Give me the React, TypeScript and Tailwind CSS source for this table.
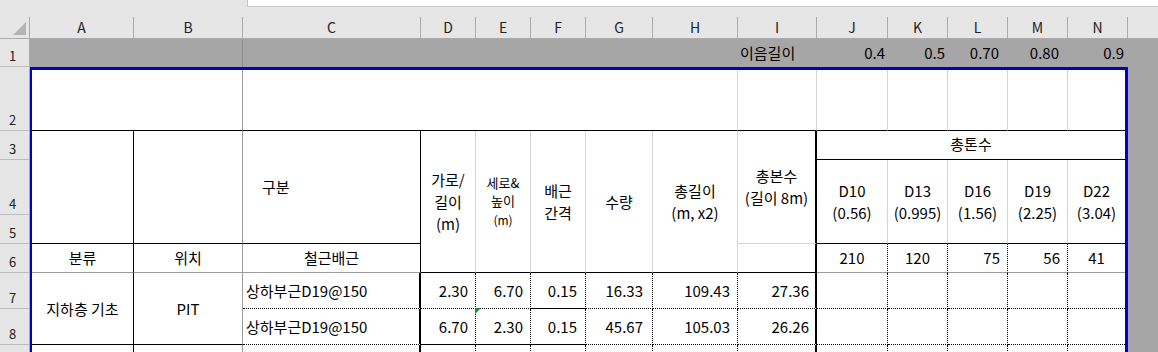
import React from "react";

// border helpers (sheet gridlines, black borders, dotted hairlines, freeze-pane line)
const rG = "border-r border-r-[#d4d4d4]";
const rK = "border-r border-r-black";
const rK2 = "border-r-2 border-r-black";
const rF = "border-r border-r-[#9c9c9c]";
const rD = "border-r border-r-black [border-right-style:dotted]";
const bK = "border-b border-b-black";
const bG = "border-b border-b-[#d4d4d4]";
const bF = "border-b border-b-[#9c9c9c]";
const bD = "border-b border-b-black [border-bottom-style:dotted]";

const HEADS: [string, string][] = [
  ["A", "w-[104px]"],
  ["B", "w-[109px]"],
  ["C", "w-[178px]"],
  ["D", "w-[55px]"],
  ["E", "w-[55px]"],
  ["F", "w-[55px]"],
  ["G", "w-[67px]"],
  ["H", "w-[85px]"],
  ["I", "w-[79px]"],
  ["J", "w-[71px]"],
  ["K", "w-[60px]"],
  ["L", "w-[60px]"],
  ["M", "w-[60px]"],
  ["N", "w-[60px]"],
];

const ROW1: Record<string, React.ReactNode> = {
  I: <span className="pl-[2px]">이음길이</span>,
  J: <span className="ml-auto pr-[3px]">0.4</span>,
  K: <span className="ml-auto pr-[3px]">0.5</span>,
  L: <span className="ml-auto pr-[9px]">0.70</span>,
  M: <span className="ml-auto pr-[9px]">0.80</span>,
  N: <span className="ml-auto pr-[4px]">0.9</span>,
};

// row 9 is cut off at the bottom, its number is not visible
const ROW_HEADS: [string, string][] = [
  ["2", "h-[64px]"],
  ["3", "h-[29px]"],
  ["4", "h-[55px]"],
  ["5", "h-[29px]"],
  ["6", "h-[29px]"],
  ["7", "h-[36px]"],
  ["8", "h-[36px]"],
  ["", "h-[40px]"],
];

function Cell({ className, children }: { className: string; children?: React.ReactNode }) {
  return <div className={`flex min-w-0 ${className}`}>{children}</div>;
}

function Num({ v, pr = "pr-[7px]" }: { v: string; pr?: string }) {
  return <span className={`ml-auto self-center ${pr}`}>{v}</span>;
}

function RowHead({ n, h }: { n: string; h: string }) {
  return (
    <div className={`${h} flex items-end justify-center pr-[4px] pb-[4px] border-b border-b-[#bdbdbd] text-[13px] leading-none text-[#222]`}>
      {n}
    </div>
  );
}

export default function App() {
  return (
    <div className="w-[1158px] h-[352px] overflow-hidden bg-[#e6e6e6] font-['Noto_Sans_CJK_KR','Noto_Sans',sans-serif] text-black">
      {/* formula bar edge */}
      <div className="flex h-[17px]">
        <div className="w-[247px]" />
        <div className="flex-1 h-[7px] bg-white border-l border-b border-[#c6c6c6]" />
      </div>

      {/* column headers */}
      <div className="flex h-[22px] text-[14px] text-[#222]">
        <div className="w-[30px] border-r border-b border-[#ababab] flex items-end">
          <svg width="29" height="21" viewBox="0 0 29 21">
            <polygon points="13,18 26,18 26,5" fill="#b4b4b4" />
          </svg>
        </div>
        {HEADS.map(([l, w]) => (
          <div key={l} className={`${w} border-r border-b border-[#ababab] flex items-center justify-center pb-[1px]`}>
            {l}
          </div>
        ))}
        <div className="flex-1 border-b border-[#ababab]" />
      </div>

      {/* row 1 */}
      <div className="flex h-[28px] text-[15px]">
        <RowHead n="1" h="h-[28px] w-[30px] border-r border-r-[#ababab]" />
        <div className="flex flex-1 bg-[#a6a6a6]">
          {HEADS.map(([l, w]) => (
            <div key={l} className={`${w} flex items-center ${l === "B" ? "border-r border-r-[#8c8c8c]" : ""}`}>
              {ROW1[l]}
            </div>
          ))}
          <div className="flex-1" />
        </div>
      </div>

      {/* body */}
      <div className="flex">
        <div className="w-[30px] border-r border-r-[#ababab] flex flex-col">
          {ROW_HEADS.map(([n, h], i) => (
            <RowHead key={i} n={n} h={h} />
          ))}
        </div>

        <div className="bg-white border-t-[3px] border-l-2 border-r-[3px] border-[#0000cc] text-[15px] leading-[22px]">
          <div className="grid grid-cols-[102px_109px_178px_55px_55px_55px_67px_85px_79px_71px_60px_60px_60px_57px] grid-rows-[61px_29px_55px_29px_29px_36px_36px_40px]">
            {/* row 2 */}
            <Cell className={`col-start-1 row-start-1 col-span-2 ${rF} ${bK}`} />
            <Cell className={`col-start-3 row-start-1 col-span-6 ${rG} ${bK}`} />
            <Cell className={`col-start-9 row-start-1 ${rG} ${bK}`} />
            <Cell className={`col-start-10 row-start-1 ${rG} ${bK}`} />
            <Cell className={`col-start-11 row-start-1 ${rG} ${bK}`} />
            <Cell className={`col-start-12 row-start-1 ${rG} ${bK}`} />
            <Cell className={`col-start-13 row-start-1 ${rG} ${bK}`} />
            <Cell className={`col-start-14 row-start-1 ${bK}`} />

            {/* rows 3-6 : header block */}
            <Cell className={`col-start-1 row-start-2 row-span-3 ${rK} ${bK}`} />
            <Cell className={`col-start-2 row-start-2 row-span-3 ${rF} ${bK}`} />
            <Cell className={`col-start-3 row-start-2 row-span-3 items-center pl-[19px] ${rK} ${bK}`}>구분</Cell>
            <Cell className={`col-start-4 row-start-2 row-span-4 items-center justify-center text-center ${rG} ${bK}`}>
              <span>가로/<br />길이<br />(m)</span>
            </Cell>
            <Cell className={`col-start-5 row-start-2 row-span-4 items-center justify-center text-center text-[13px] leading-[18.5px] ${rG} ${bK}`}>
              <span>세로&amp;<br />높이<br /><span className="text-[12px]">(m)</span></span>
            </Cell>
            <Cell className={`col-start-6 row-start-2 row-span-4 items-center justify-center text-center ${rG} ${bK}`}>
              <span>배근<br />간격</span>
            </Cell>
            <Cell className={`col-start-7 row-start-2 row-span-4 items-center justify-center ${rG} ${bK}`}>수량</Cell>
            <Cell className={`col-start-8 row-start-2 row-span-4 items-center justify-center text-center ${rG} ${bK}`}>
              <span>총길이<br />(m, x2)</span>
            </Cell>
            <Cell className={`col-start-9 row-start-2 row-span-3 items-center justify-center text-center ${rK2} ${bG}`}>
              <span>총본수<br />(길이 8m)</span>
            </Cell>
            <Cell className={`col-start-9 row-start-5 ${rK2} ${bK}`} />
            <Cell className={`col-start-10 row-start-2 col-span-5 items-center justify-center pb-[3px] ${bK}`}>총톤수</Cell>

            <Cell className={`col-start-10 row-start-3 row-span-2 items-center justify-center text-center ${rG} ${bK}`}>
              <span>D10<br />(0.56)</span>
            </Cell>
            <Cell className={`col-start-11 row-start-3 row-span-2 items-center justify-center text-center ${rG} ${bK}`}>
              <span>D13<br />(0.995)</span>
            </Cell>
            <Cell className={`col-start-12 row-start-3 row-span-2 items-center justify-center text-center ${rG} ${bK}`}>
              <span>D16<br />(1.56)</span>
            </Cell>
            <Cell className={`col-start-13 row-start-3 row-span-2 items-center justify-center text-center ${rG} ${bK}`}>
              <span>D19<br />(2.25)</span>
            </Cell>
            <Cell className={`col-start-14 row-start-3 row-span-2 items-center justify-center text-center ${bK}`}>
              <span>D22<br />(3.04)</span>
            </Cell>

            {/* row 6 */}
            <Cell className={`col-start-1 row-start-5 items-center justify-center ${rK} ${bF}`}>분류</Cell>
            <Cell className={`col-start-2 row-start-5 items-center justify-center ${rF} ${bF}`}>위치</Cell>
            <Cell className={`col-start-3 row-start-5 items-center justify-center ${rK} ${bF}`}>철근배근</Cell>
            <Cell className={`col-start-10 row-start-5 items-center justify-center ${rD} ${bF}`}>210</Cell>
            <Cell className={`col-start-11 row-start-5 items-center justify-center ${rD} ${bF}`}>120</Cell>
            <Cell className={`col-start-12 row-start-5 ${rD} ${bF}`}><Num v="75" /></Cell>
            <Cell className={`col-start-13 row-start-5 ${rD} ${bF}`}><Num v="56" /></Cell>
            <Cell className={`col-start-14 row-start-5 items-center justify-center ${bF}`}>41</Cell>

            {/* rows 7-8 : data */}
            <Cell className={`col-start-1 row-start-6 row-span-2 items-center justify-center ${rK} ${bK}`}>지하층 기초</Cell>
            <Cell className={`col-start-2 row-start-6 row-span-2 items-center justify-center ${rF} ${bK}`}>PIT</Cell>

            <Cell className={`col-start-3 row-start-6 items-center pl-[3px] ${rK2} ${bD}`}>상하부근D19@150</Cell>
            <Cell className={`col-start-4 row-start-6 ${rD} ${bD}`}><Num v="2.30" /></Cell>
            <Cell className={`col-start-5 row-start-6 ${rD} ${bD}`}><Num v="6.70" /></Cell>
            <Cell className={`col-start-6 row-start-6 ${rD} ${bK}`}><Num v="0.15" pr="pr-[8px]" /></Cell>
            <Cell className={`col-start-7 row-start-6 ${rD} ${bD}`}><Num v="16.33" pr="pr-[9px]" /></Cell>
            <Cell className={`col-start-8 row-start-6 ${rD} ${bD}`}><Num v="109.43" /></Cell>
            <Cell className={`col-start-9 row-start-6 ${rK2} ${bD}`}><Num v="27.36" pr="pr-[6px]" /></Cell>
            <Cell className={`col-start-10 row-start-6 ${rD} ${bD}`} />
            <Cell className={`col-start-11 row-start-6 ${rD} ${bD}`} />
            <Cell className={`col-start-12 row-start-6 ${rD} ${bD}`} />
            <Cell className={`col-start-13 row-start-6 ${rD} ${bD}`} />
            <Cell className={`col-start-14 row-start-6 ${bD}`} />

            <Cell className={`col-start-3 row-start-7 items-center pl-[3px] ${rK2} ${bD}`}>상하부근D19@150</Cell>
            <Cell className={`col-start-4 row-start-7 ${rD} ${bK}`}><Num v="6.70" /></Cell>
            <Cell className={`col-start-5 row-start-7 relative ${rD} ${bK}`}>
              <span className="absolute -top-px -left-px w-0 h-0 border-t-[6px] border-r-[6px] border-t-[#1a8a35] border-r-transparent" />
              <Num v="2.30" />
            </Cell>
            <Cell className={`col-start-6 row-start-7 ${rD} ${bK}`}><Num v="0.15" pr="pr-[8px]" /></Cell>
            <Cell className={`col-start-7 row-start-7 ${rD} ${bD}`}><Num v="45.67" pr="pr-[9px]" /></Cell>
            <Cell className={`col-start-8 row-start-7 ${rD} ${bD}`}><Num v="105.03" /></Cell>
            <Cell className={`col-start-9 row-start-7 ${rK2} ${bD}`}><Num v="26.26" pr="pr-[6px]" /></Cell>
            <Cell className={`col-start-10 row-start-7 ${rD} ${bD}`} />
            <Cell className={`col-start-11 row-start-7 ${rD} ${bD}`} />
            <Cell className={`col-start-12 row-start-7 ${rD} ${bD}`} />
            <Cell className={`col-start-13 row-start-7 ${rD} ${bD}`} />
            <Cell className={`col-start-14 row-start-7 ${bD}`} />

            {/* row 9 (cut off) */}
            <Cell className={`col-start-1 row-start-8 ${rK}`} />
            <Cell className={`col-start-2 row-start-8 ${rF}`} />
            <Cell className={`col-start-3 row-start-8 ${rK2}`} />
            <Cell className={`col-start-4 row-start-8 ${rD}`} />
            <Cell className={`col-start-5 row-start-8 ${rD}`} />
            <Cell className={`col-start-6 row-start-8 ${rD}`} />
            <Cell className={`col-start-7 row-start-8 ${rD}`} />
            <Cell className={`col-start-8 row-start-8 ${rD}`} />
            <Cell className={`col-start-9 row-start-8 ${rK2}`} />
            <Cell className={`col-start-10 row-start-8 ${rD}`} />
            <Cell className={`col-start-11 row-start-8 ${rD}`} />
            <Cell className={`col-start-12 row-start-8 ${rD}`} />
            <Cell className={`col-start-13 row-start-8 ${rD}`} />
          </div>
        </div>

        <div className="flex-1 bg-[#a6a6a6]" />
      </div>
    </div>
  );
}
